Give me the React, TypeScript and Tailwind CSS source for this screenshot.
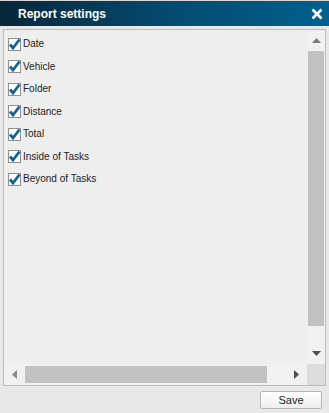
import React from "react";

const items = ["Date", "Vehicle", "Folder", "Distance", "Total", "Inside of Tasks", "Beyond of Tasks"];

function Check() {
  return (
    <svg width="13" height="13" viewBox="0 0 13 13" className="shrink-0">
      <rect x="0.5" y="0.5" width="12" height="12" fill="#ffffff" stroke="#8f8f8f" />
      <path d="M2 6.5 L5 10 L11.5 1.5" fill="none" stroke="#17618f" strokeWidth="2.8" strokeLinejoin="miter" />
    </svg>
  );
}

export default function App() {
  return (
    <div className="w-[329px] h-[413px] bg-[#e8e8e8] flex flex-col overflow-hidden" style={{ fontFamily: '"Liberation Sans", Arial, sans-serif' }}>
      <div className="h-[1px] bg-[#d8d8d8]" />
      <div className="h-[25px] flex items-center justify-between pl-[18px] pr-[6px] bg-gradient-to-r from-[#07263a] via-[#034a6e] to-[#00608f]">
        <span className="text-white font-bold text-[12px]">Report settings</span>
        <svg width="12" height="12" viewBox="0 0 12 12">
          <path d="M1.5 1.5 L10.5 10.5 M10.5 1.5 L1.5 10.5" stroke="#ffffff" strokeWidth="2.6" />
        </svg>
      </div>
      <div className="mt-[3px] mx-[3px] h-[357px] border border-[#c3b9bd] bg-[#eeeeee] grid grid-cols-[1fr_18px] grid-rows-[1fr_21px]">
        <div className="pl-[4px] pt-[3px] flex flex-col">
          {items.map((t) => (
            <div key={t} className="h-[22.5px] flex items-center gap-[2px]">
              <Check />
              <span className="text-[10px] text-[#222] leading-none">{t}</span>
            </div>
          ))}
        </div>
        <div className="bg-[#f1f1f1] flex flex-col items-center">
          <div className="h-[21px] flex items-center justify-center">
            <svg width="9" height="5" viewBox="0 0 9 5"><path d="M4.5 0 L9 5 L0 5 Z" fill="#7a7a7a" /></svg>
          </div>
          <div className="w-[16px] h-[275px] bg-[#c1c1c1]" />
          <div className="mt-auto h-[21px] flex items-center justify-center">
            <svg width="9" height="5" viewBox="0 0 9 5"><path d="M0 0 L9 0 L4.5 5 Z" fill="#505050" /></svg>
          </div>
        </div>
        <div className="bg-[#f1f1f1] flex items-center">
          <div className="w-[21px] flex items-center justify-center">
            <svg width="5" height="9" viewBox="0 0 5 9"><path d="M5 0 L5 9 L0 4.5 Z" fill="#8a8a8a" /></svg>
          </div>
          <div className="w-[242px] h-[17px] bg-[#c1c1c1]" />
          <div className="ml-auto w-[21px] flex items-center justify-center">
            <svg width="5" height="9" viewBox="0 0 5 9"><path d="M0 0 L5 4.5 L0 9 Z" fill="#505050" /></svg>
          </div>
        </div>
        <div className="bg-[#dcdcdc]" />
      </div>
      <div className="flex justify-end pr-[7px] mt-[5px]">
        <button className="w-[62px] h-[18px] border border-[#b5b5b5] rounded-[2px] bg-gradient-to-b from-[#ffffff] to-[#eeeeee] text-[11px] text-[#222] leading-none flex items-center justify-center">
          Save
        </button>
      </div>
    </div>
  );
}
